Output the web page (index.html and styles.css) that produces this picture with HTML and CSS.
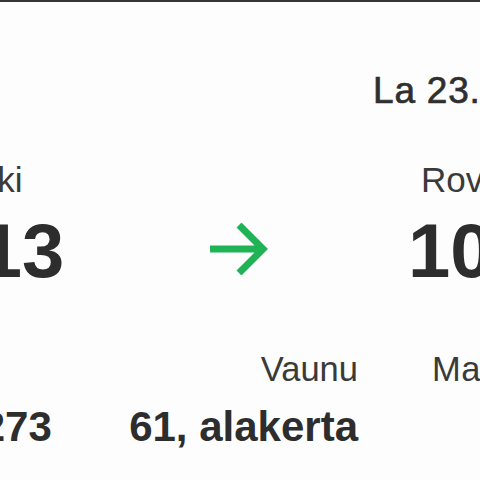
FILE: index.html
```
<!DOCTYPE html>
<html lang="fi">
<head>
<meta charset="utf-8">
<title>Lippu</title>
<link rel="stylesheet" href="styles.css">
</head>
<body>
<main class="ticket">
  <div class="inner">
    <div class="date-row"><span class="date">La 23.3.2024</span></div>
    <div class="route">
      <div class="stop stop-from">
        <div class="city">Helsinki</div>
        <div class="time">06:13</div>
      </div>
      <div class="arrow">
        <svg width="58" height="52" viewBox="0 0 58 52" aria-hidden="true">
          <path d="M0 26 H52 M29 2 L53 26 L29 50" fill="none" stroke="#1fb356" stroke-width="7" stroke-linejoin="miter"/>
        </svg>
      </div>
      <div class="stop stop-to">
        <div class="city">Rovaniemi</div>
        <div class="time">10:48</div>
      </div>
    </div>
    <div class="details">
      <div class="detail detail-train">
        <div class="label">Juna</div>
        <div class="value">IC 273</div>
      </div>
      <div class="detail detail-car">
        <div class="label">Vaunu</div>
        <div class="value">61, alakerta</div>
      </div>
      <div class="detail detail-class">
        <div class="label">Matkustajaluokka</div>
        <div class="value">Eko</div>
      </div>
    </div>
  </div>
</main>
</body>
</html>
```
FILE: styles.css
```
html, body {
  margin: 0;
  padding: 0;
  background: #fdfdfd;
}

body {
  width: 480px;
  height: 480px;
  overflow: hidden;
  font-family: "Liberation Sans", Arial, sans-serif;
  color: #2f2f2f;
}

.ticket {
  box-sizing: border-box;
  width: 480px;
  height: 480px;
  overflow: hidden;
  border-top: 2px solid #363636;
  background: #fdfdfd;
  padding-top: 69px;
}

.inner {
  width: 900px;
  margin-left: -160px;
}

.date-row {
  padding-left: 533px;
  height: 40px;
  line-height: 40px;
}

.date {
  font-size: 37px;
  font-weight: 400;
  letter-spacing: 0.8px;
  -webkit-text-stroke: 0.7px #2f2f2f;
  white-space: nowrap;
}

.route {
  margin-top: 49px;
  padding-left: 30px;
  display: grid;
  grid-template-columns: 340px 198px 1fr;
  align-items: start;
}

.stop {
  white-space: nowrap;
}

.city {
  font-size: 35px;
  line-height: 40px;
  height: 40px;
  color: #3a3a3a;
}

.stop-from .city {
  margin-left: 30px;
}

.stop-to .city {
  margin-left: 13px;
}

.time {
  margin-top: 11px;
  font-size: 76px;
  line-height: 80px;
  font-weight: 700;
  color: #2d2d2d;
}

.arrow {
  margin-top: 63px;
  width: 58px;
  height: 52px;
}

.arrow svg {
  display: block;
}

.details {
  margin-top: 58px;
  padding-left: 88px;
  display: grid;
  grid-template-columns: 200px 230px auto;
  justify-content: start;
}

.detail {
  white-space: nowrap;
}

.detail-train .label {
  margin-left: -10px;
}

.detail-car {
  text-align: right;
}

.detail-class {
  margin-left: 74px;
  justify-self: start;
  text-align: right;
}

.detail-class .label {
  letter-spacing: 0.6px;
}

.label {
  font-size: 34.5px;
  line-height: 40px;
  height: 40px;
  color: #3a3a3a;
}

.value {
  margin-top: 14px;
  font-size: 42px;
  line-height: 48px;
  font-weight: 700;
  color: #2d2d2d;
}
```
